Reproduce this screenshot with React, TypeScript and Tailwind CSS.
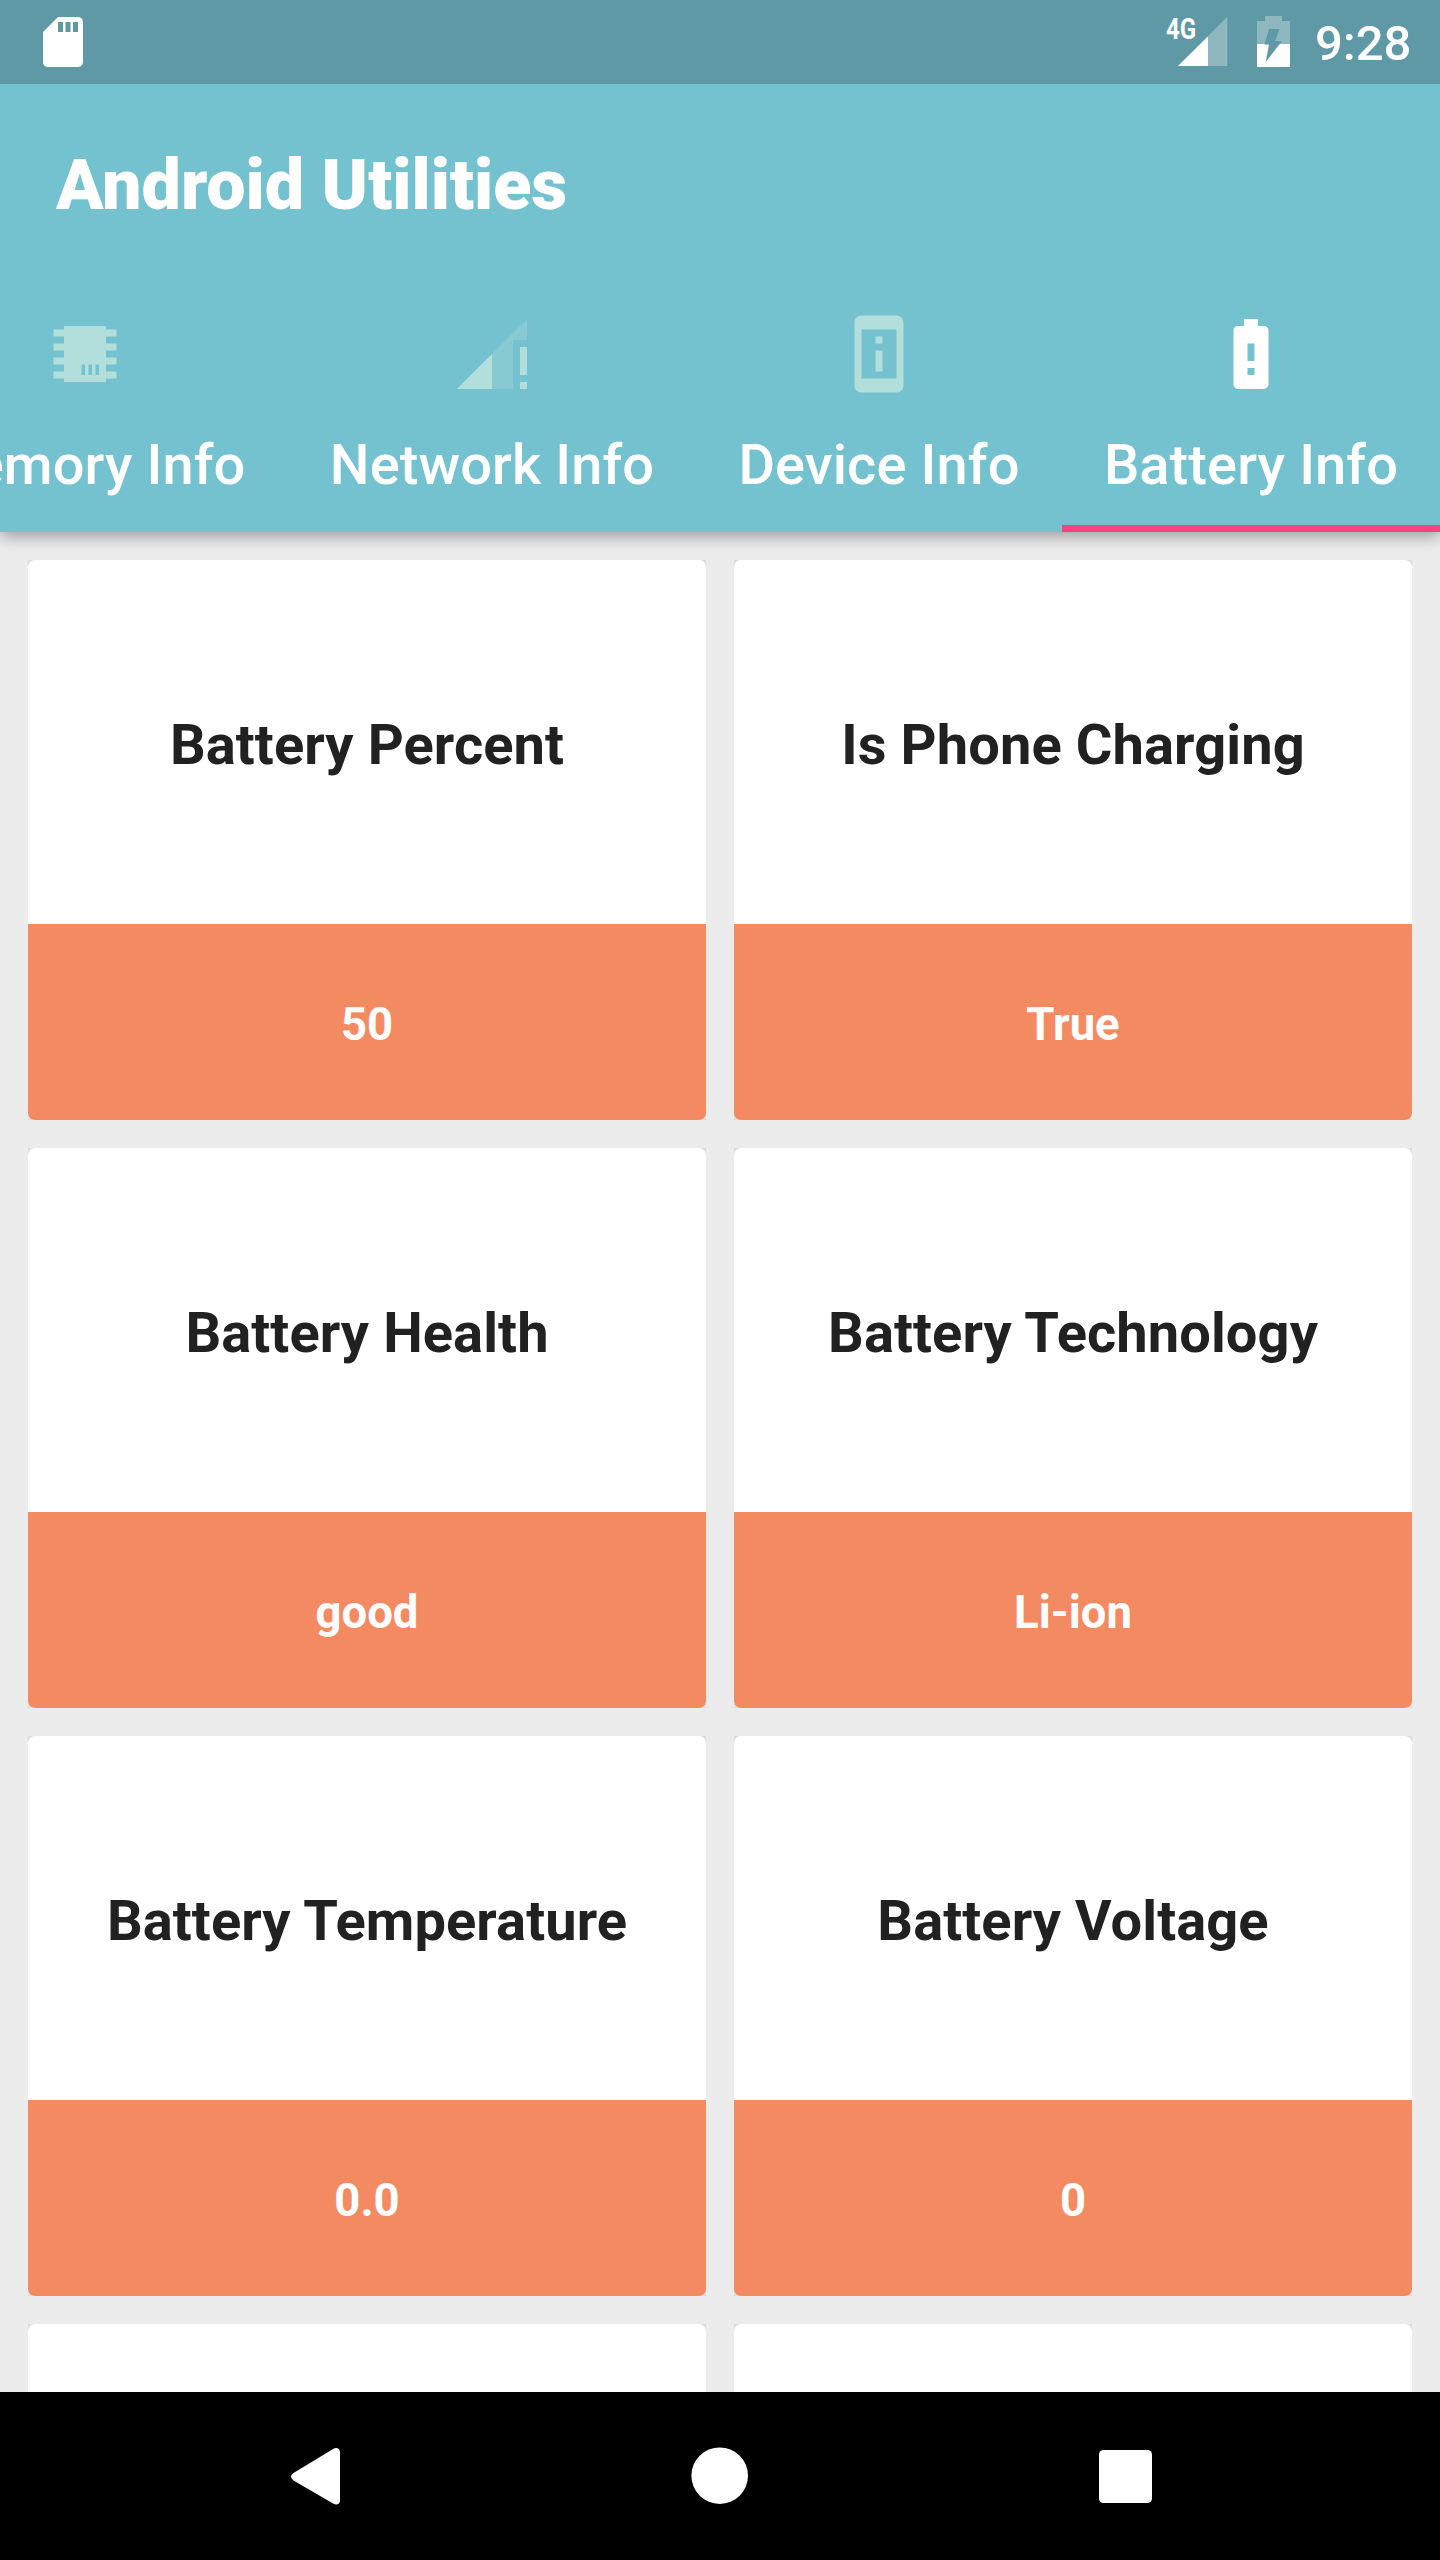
const cards = [
  { title: "Battery Percent", value: "50" },
  { title: "Is Phone Charging", value: "True" },
  { title: "Battery Health", value: "good" },
  { title: "Battery Technology", value: "Li-ion" },
  { title: "Battery Temperature", value: "0.0" },
  { title: "Battery Voltage", value: "0" },
  { title: "", value: "" },
  { title: "", value: "" },
];

function StatusBar() {
  return (
    <div className="flex h-[84px] shrink-0 items-start justify-between bg-[#5e99a5] pl-[33px] pr-[28px]">
      <svg className="mt-3 size-[60px]" viewBox="0 0 24 24" fill="#fff">
        <path d="M18 2h-8L4.02 8 4 20c0 1.1.9 2 2 2h12c1.1 0 2-.9 2-2V4c0-1.1-.9-2-2-2zm-6 6h-2V4h2v4zm3 0h-2V4h2v4zm3 0h-2V4h2v4z" />
      </svg>
      <div className="flex">
        <div className="relative h-[84px] w-[62px]">
          <span className="absolute left-0 top-[12px] origin-left scale-x-[0.83] text-[29px] font-bold leading-[34px]">4G</span>
          <svg className="absolute left-[12px] top-[16px] h-[50px] w-[50px]" viewBox="0 0 50 50" fill="#fff">
            <path d="M49.300 .700V50H0z" fillOpacity=".3" />
            <path d="M30 20.500V50H0z" />
          </svg>
        </div>
        <svg className="ml-[29px] mt-[16px] h-[51px] w-[33px]" viewBox="0 0 33 51">
          <path fill="#fff" fillOpacity=".3" d="M8 0h17v5h8v46H0V5h8z" />
          <path fill="#fff" d="M0 28h33v23H0z" />
          <path fill="#5e99a5" d="M12 13h10.500l-4.300 12H25L8.700 46 12 28.500H7.500z" />
        </svg>
        <span className="ml-[25px] mt-[15px] w-[97px] whitespace-nowrap text-[49px] font-medium leading-[58px]">9:28</span>
      </div>
    </div>
  );
}

function Tab({ label, width, active, children }: { label: string; width: string; active?: boolean; children: React.ReactNode }) {
  return (
    <div className={`flex h-[252px] shrink-0 flex-col items-center ${width} ${active ? "border-b-[7px] border-[#ff4081]" : ""}`}>
      <svg className={`mt-8 size-[84px] ${active ? "fill-white" : "fill-[#b2dfdb]"}`} viewBox="0 0 24 24">
        {children}
      </svg>
      <span className="mt-[36px] whitespace-nowrap text-[56px] font-medium leading-[66px] tracking-[0.1px]">{label}</span>
    </div>
  );
}

function Tabs() {
  return (
    <div className="flex justify-end overflow-hidden">
      <Tab label="Memory Info" width="w-[406px]">
        <path fillRule="evenodd" d="M6 4h12v1h3v2h-3v2h3v2h-3v2h3v2h-3v2h3v2h-3v1H6v-1H3v-2h3v-2H3v-2h3v-2H3V9h3V7H3V5h3zM11 15v3h1v-3zM13 15v3h1v-3zM15 15v3h1v-3z" />
      </Tab>
      <Tab label="Network Info" width="w-[408px]">
        <path fillOpacity=".3" d="M22 8V2L2 22h16V8z" />
        <path d="M20 22h2v-2h-2v2zm0-12v8h2v-8h-2zM12 22V12L2 22z" />
      </Tab>
      <Tab label="Device Info" width="w-[366px]">
        <path d="M13 7h-2v2h2V7zm0 4h-2v6h2v-6zm4-9.990L7 1c-1.100 0-2 .9-2 2v18c0 1.100.9 2 2 2h10c1.100 0 2-.9 2-2V3c0-1.100-.9-1.990-2-1.990zM17 19H7V5h10v14z" />
      </Tab>
      <Tab label="Battery Info" width="w-[378px]" active>
        <path d="M15.670 4H14V2h-4v2H8.330C7.600 4 7 4.600 7 5.330v15.330C7 21.400 7.600 22 8.330 22h7.330c.74 0 1.340-.6 1.340-1.330V5.330C17 4.600 16.400 4 15.670 4zM13 18h-2v-2h2v2zm0-4h-2V9h2v5z" />
      </Tab>
    </div>
  );
}

function Card({ title, value }: { title: string; value: string }) {
  return (
    <div className="bg-[#dcdcdc]">
      <div className="flex h-[560px] flex-col overflow-hidden rounded-[7px] bg-white">
        <div className="flex h-[364px] items-center justify-center pt-1.5 text-[56px] font-bold leading-[66px] tracking-[0.1px] text-[#212121]">{title}</div>
        <div className="flex h-[196px] items-center justify-center bg-[#f48a62] pt-1.5 text-[45.5px] font-bold leading-[54px] text-white">{value}</div>
      </div>
    </div>
  );
}

function NavBar() {
  return (
    <div className="flex h-[168px] shrink-0 bg-black">
      <svg className="h-[168px] w-[1440px]" viewBox="0 0 1440 168" fill="#fff">
        <path d="M293.500 81L333.500 56.800C336.500 55.200 340 56.500 340 60V108.500C340 112 336.500 113.500 333.500 111.700L293.500 88.500Q288.500 84.700 293.500 81z" />
        <circle cx="719.700" cy="83.700" r="28.300" />
        <rect x="1099" y="58" width="53" height="53" rx="4.500" />
      </svg>
    </div>
  );
}

export default function App() {
  return (
    <div className="flex h-[2560px] w-[1440px] flex-col overflow-hidden bg-[#ececec] font-['Roboto',sans-serif] text-white">
      <header className="relative z-10 shrink-0 bg-[#74c2cf] shadow-[0_5px_14px_rgba(0,0,0,0.32)]">
        <StatusBar />
        <div className="flex h-[196px] items-center pl-14">
          <h1 className="pt-1.5 text-[70px] font-black leading-[82px]">Android Utilities</h1>
        </div>
        <Tabs />
      </header>
      <main className="grid min-h-0 flex-1 grid-cols-2 content-start gap-7 overflow-hidden p-7">
        {cards.map((c, i) => (
          <Card key={i} title={c.title} value={c.value} />
        ))}
      </main>
      <NavBar />
    </div>
  );
}
